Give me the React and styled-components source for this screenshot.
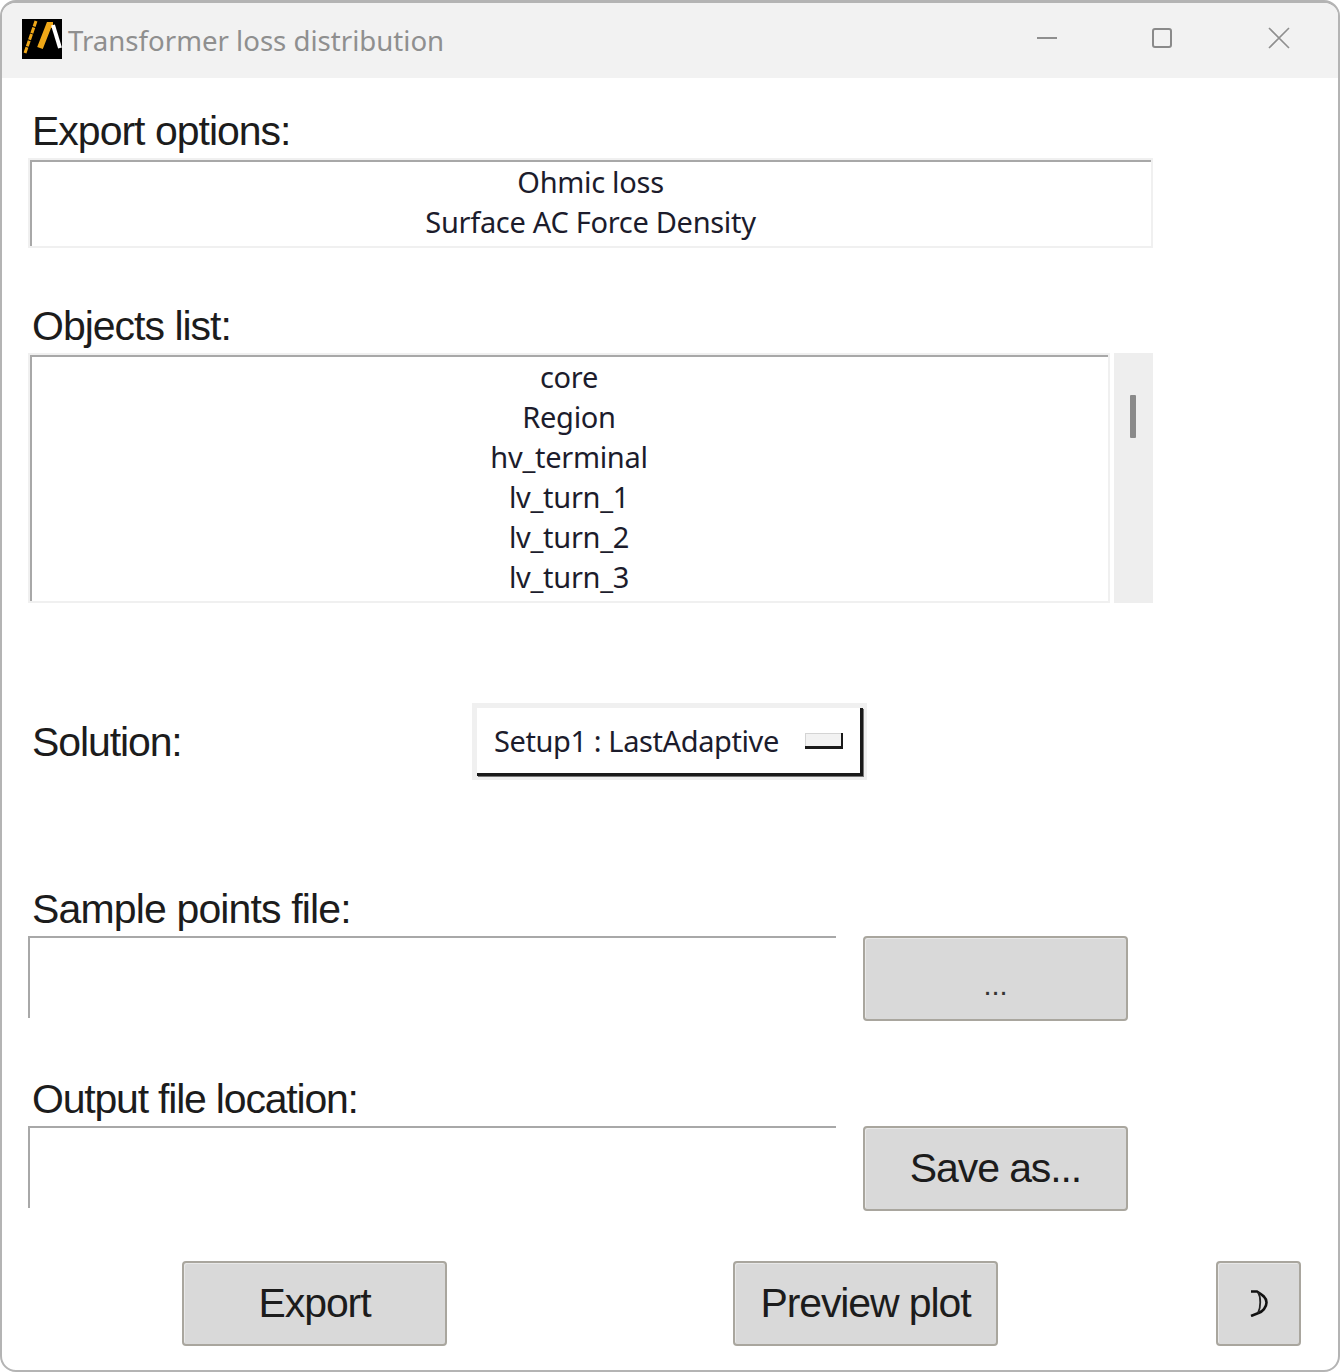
import React from 'react';
import styled, { createGlobalStyle } from 'styled-components';

const GlobalStyle = createGlobalStyle`
  html, body {
    margin: 0;
    padding: 0;
    background: #ffffff;
  }
  * {
    box-sizing: border-box;
  }
`;

const Window = styled.div`
  width: 1340px;
  height: 1372px;
  overflow: hidden;
  display: flex;
  flex-direction: column;
  background: #ffffff;
  border: 2px solid #b4b4b4;
  border-top-width: 3px;
  border-radius: 16px;
  font-family: "Liberation Sans", Arial, sans-serif;
`;

const TitleBar = styled.div`
  flex: none;
  height: 75px;
  display: flex;
  align-items: center;
  padding: 0 0 3px 20px;
  background: #f2f2f2;
`;

const Logo = styled.svg`
  flex: none;
  width: 40px;
  height: 40px;
  margin-top: -1px;
`;

const Title = styled.div`
  flex: 1;
  margin: 1px 0 0 6px;
  font-family: "Noto Sans", "Open Sans", sans-serif;
  font-size: 27.6px;
  color: #8f8f8f;
  white-space: nowrap;
`;

const WinControls = styled.div`
  display: flex;
  align-items: center;
  padding-right: 48px;
  gap: 93px;
  margin-top: -3px;
`;

const CloseSlot = styled.div`
  display: flex;
  margin-left: 2px;
`;

const Content = styled.div`
  flex: 1;
  display: flex;
  flex-direction: column;
  padding-left: 26px;
`;

const Label = styled.div`
  height: 50px;
  margin-top: ${props => props.$top || 0}px;
  padding-left: 4px;
  font-size: 41px;
  line-height: 46px;
  letter-spacing: ${props => props.$ls || -1}px;
  color: #1c1c1c;
  white-space: nowrap;
`;

const ListBox = styled.div`
  width: ${props => props.$w}px;
  height: ${props => props.$h}px;
  padding-top: 2px;
  border: 2px solid #f0f0f0;
  background: #ffffff;
  box-shadow: inset 2px 2px 0 #a8a8a8;
  font-family: "Noto Sans", "Open Sans", sans-serif;
  font-size: 29px;
  line-height: 40px;
  color: #1c1c2c;
  text-align: center;
  letter-spacing: -0.3px;
`;

const ListRow = styled.div`
  display: flex;
  gap: 4px;
`;

const ScrollTrack = styled.div`
  width: 39px;
  height: 250px;
  padding: 42px 0 0 16px;
  background: #eeeeee;
`;

const ScrollThumb = styled.div`
  width: 6px;
  height: 43px;
  border-radius: 1px;
  background: #8a8a8a;
`;

const SolutionRow = styled.div`
  display: flex;
  align-items: center;
  height: 77px;
  margin-top: 100px;
`;

const SolutionLabel = styled(Label)`
  width: 444px;
  height: auto;
`;

const Dropdown = styled.div`
  width: 395px;
  height: 77px;
  padding: 5px 4px 4px 5px;
  background: #f0f0f0;
`;

const DropdownFace = styled.div`
  height: 100%;
  display: flex;
  align-items: center;
  justify-content: space-between;
  padding: 0 17px 0 17px;
  background: #ffffff;
  border-right: 3px solid #1a1a1a;
  border-bottom: 3px solid #1a1a1a;
  box-shadow: 1px 1px 0 #777777;
  font-family: "Noto Sans", "Open Sans", sans-serif;
  font-size: 29px;
  letter-spacing: -0.4px;
  color: #1c1c2c;
`;

const DropdownMark = styled.span`
  width: 38px;
  height: 16px;
  background: #f2f2f2;
  border-right: 2px solid #1a1a1a;
  border-bottom: 3px solid #1a1a1a;
  box-shadow: inset 1px 1px 0 #d4d4d4;
`;

const FileRow = styled.div`
  display: flex;
  align-items: flex-start;
  gap: 27px;
`;

const FileInput = styled.div`
  width: 808px;
  height: 82px;
  background: #ffffff;
  border-top: 2px solid #a8a8a8;
  border-left: 2px solid #a8a8a8;
`;

const Button = styled.div`
  flex: none;
  width: ${props => props.$w || 265}px;
  height: 85px;
  display: flex;
  align-items: center;
  justify-content: center;
  background: #d9d9d9;
  border: 2px solid #a9a69e;
  border-radius: 4px;
  box-shadow: inset 1px 1px 0 #e8e8e8;
  font-size: 41px;
  letter-spacing: -1.1px;
  color: #1c1c1c;
`;

const DotsLabel = styled.span`
  font-size: 29px;
  letter-spacing: 0;
  margin-top: 14px;
  color: #333333;
`;

const BottomBar = styled.div`
  display: flex;
  margin-top: 50px;
  padding-left: 154px;
`;

const PreviewButton = styled(Button)`
  margin-left: 286px;
`;

const MoonButton = styled(Button)`
  margin-left: 218px;
`;

const MinimizeIcon = () => (
  <svg width="22" height="22" viewBox="0 0 22 22">
    <path d="M1 11h20" stroke="#8f8f8f" strokeWidth="2" fill="none" />
  </svg>
);

const MaximizeIcon = () => (
  <svg width="22" height="22" viewBox="0 0 22 22">
    <rect x="2" y="2" width="18" height="18" rx="2" stroke="#8a8a8a" strokeWidth="2" fill="none" />
  </svg>
);

const CloseIcon = () => (
  <svg width="22" height="22" viewBox="0 0 22 22">
    <path d="M1 1l20 20M21 1L1 21" stroke="#8f8f8f" strokeWidth="1.6" fill="none" />
  </svg>
);

const MoonIcon = () => (
  <svg width="18" height="27" viewBox="0 0 18 27">
    <path d="M1 1.5h6c5 3 9.5 6 9.5 11s-4 9-8 10.5L1 26" stroke="#111" strokeWidth="2.6" fill="none" />
    <path d="M8 2c3 5 3 15 0 21" stroke="#222" strokeWidth="1.8" fill="none" />
  </svg>
);

const objects = ['core', 'Region', 'hv_terminal', 'lv_turn_1', 'lv_turn_2', 'lv_turn_3'];

function App() {
  return (
    <Window>
      <GlobalStyle />
      <TitleBar>
        <Logo viewBox="0 0 40 40">
          <rect width="40" height="40" fill="#000" />
          <path d="M3 34 L14 2" stroke="#f0a818" strokeWidth="3" strokeDasharray="6 1" fill="none" />
          <path d="M18 29 L27 6 L31 6" stroke="#f0a818" strokeWidth="6" fill="none" />
          <path d="M31 6 L38 29" stroke="#ffffff" strokeWidth="4" fill="none" />
        </Logo>
        <Title>Transformer loss distribution</Title>
        <WinControls>
          <MinimizeIcon />
          <MaximizeIcon />
          <CloseSlot>
            <CloseIcon />
          </CloseSlot>
        </WinControls>
      </TitleBar>
      <Content>
        <Label $top={30}>Export options:</Label>
        <ListBox $w={1125} $h={90}>
          <div>Ohmic loss</div>
          <div>Surface AC Force Density</div>
        </ListBox>
        <Label $top={55}>Objects list:</Label>
        <ListRow>
          <ListBox $w={1082} $h={250}>
            {objects.map(name => <div key={name}>{name}</div>)}
          </ListBox>
          <ScrollTrack>
            <ScrollThumb />
          </ScrollTrack>
        </ListRow>
        <SolutionRow>
          <SolutionLabel $ls={-1.1}>Solution:</SolutionLabel>
          <Dropdown>
            <DropdownFace>
              Setup1 : LastAdaptive
              <DropdownMark />
            </DropdownFace>
          </Dropdown>
        </SolutionRow>
        <Label $top={106} $ls={-0.85}>Sample points file:</Label>
        <FileRow>
          <FileInput />
          <Button>
            <DotsLabel>...</DotsLabel>
          </Button>
        </FileRow>
        <Label $top={55} $ls={-1.2}>Output file location:</Label>
        <FileRow>
          <FileInput />
          <Button>Save as...</Button>
        </FileRow>
        <BottomBar>
          <Button>Export</Button>
          <PreviewButton>Preview plot</PreviewButton>
          <MoonButton $w={85}>
            <MoonIcon />
          </MoonButton>
        </BottomBar>
      </Content>
    </Window>
  );
}

export default App;
